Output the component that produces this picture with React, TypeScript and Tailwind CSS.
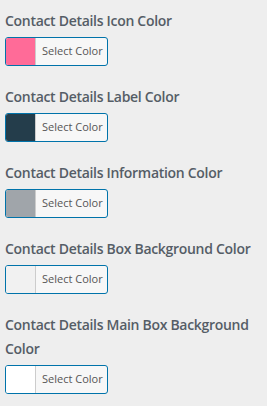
import React from "react"

const controls = [
  { label: "Contact Details Icon Color", color: "bg-[#ff6b98]" },
  { label: "Contact Details Label Color", color: "bg-[#243d4b]" },
  { label: "Contact Details Information Color", color: "bg-[#a0a5aa]" },
  { label: "Contact Details Box Background Color", color: "bg-[#f1f1f1]" },
  { label: "Contact Details Main Box Background Color", color: "bg-white" },
]

export default function App() {
  return (
    <div className="min-h-[406px] w-[267px] bg-[#eeeeee] px-[5px] pt-[8px] font-['Open_Sans','Noto_Sans',sans-serif]">
      {controls.map((c) => (
        <div key={c.label} className="mb-[18px]">
          <span className="block pt-[1px] text-[14px] leading-[24px] font-semibold text-[#555d66] tracking-[-0.3px]">
            {c.label}
          </span>
          <button className="mt-[4px] flex h-[29px] w-[103px] overflow-hidden rounded-[3px] border border-[#0073aa] bg-[#f7f7f7]">
            <span className={`h-full w-[30px] border-r border-[#cccccc] ${c.color}`} />
            <span className="flex h-full flex-1 items-center pl-[6px] text-[11px] text-[#555555]">
              Select Color
            </span>
          </button>
        </div>
      ))}
    </div>
  )
}
